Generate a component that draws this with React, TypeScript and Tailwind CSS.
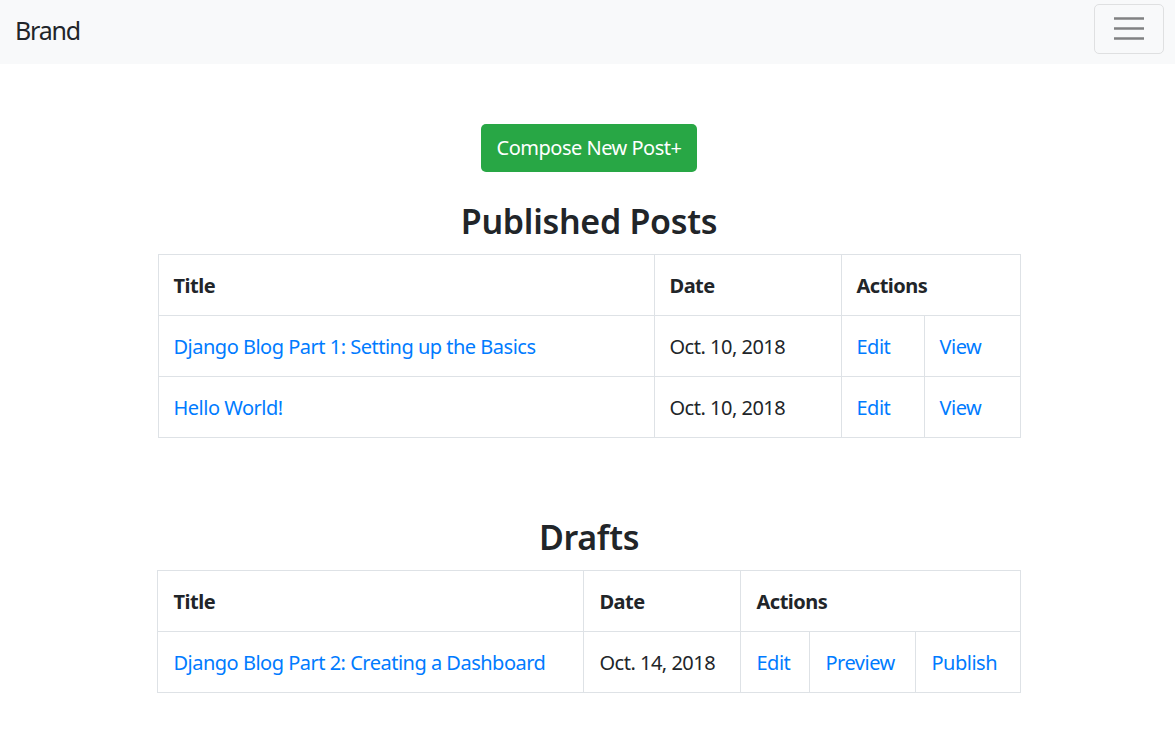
import React from 'react';

const font = { fontFamily: '"Noto Sans", "Liberation Sans", sans-serif' };

type Row = { title: string; date: string; actions: string[] };

const published: Row[] = [
  { title: 'Django Blog Part 1: Setting up the Basics', date: 'Oct. 10, 2018', actions: ['Edit', 'View'] },
  { title: 'Hello World!', date: 'Oct. 10, 2018', actions: ['Edit', 'View'] },
];

const drafts: Row[] = [
  { title: 'Django Blog Part 2: Creating a Dashboard', date: 'Oct. 14, 2018', actions: ['Edit', 'Preview', 'Publish'] },
];

const cell = 'border border-[#dee2e6] px-[15px] pt-[16px] pb-[14px] leading-[30px] text-left align-top';

const PostTable = ({ rows, widths }: { rows: Row[]; widths: number[] }) => {
  const actionCount = rows[0].actions.length;
  return (
    <table className="w-[862px] table-fixed border-collapse text-[20px] tracking-[-0.5px] text-[#212529]">
      <colgroup>
        {widths.map((w, i) => (
          <col key={i} style={{ width: w }} />
        ))}
      </colgroup>
      <thead>
        <tr>
          <th className={`${cell} font-bold`}>Title</th>
          <th className={`${cell} font-bold`}>Date</th>
          <th className={`${cell} font-bold`} colSpan={actionCount}>Actions</th>
        </tr>
      </thead>
      <tbody>
        {rows.map((r) => (
          <tr key={r.title}>
            <td className={cell}>
              <a className="text-[#007bff] whitespace-nowrap" href="#">{r.title}</a>
            </td>
            <td className={`${cell} whitespace-nowrap`}>{r.date}</td>
            {r.actions.map((a) => (
              <td key={a} className={cell}>
                <a className="text-[#007bff]" href="#">{a}</a>
              </td>
            ))}
          </tr>
        ))}
      </tbody>
    </table>
  );
};

export default function App() {
  return (
    <div className="min-h-[745px] bg-white" style={font}>
      <nav className="h-[64px] bg-[#f8f9fa] flex items-start justify-between pl-[15px] pr-[11px]">
        <a href="#" className="text-[25px] leading-[37px] tracking-[-1.2px] mt-[12px] text-[#212529]">Brand</a>
        <button className="mt-[4px] w-[70px] h-[50px] border border-[#dfe0e1] rounded-[5px] flex items-center justify-center">
          <svg width="32" height="30" viewBox="0 0 32 30">
            <path d="M1 4.5h30M1 14.5h30M1 24.5h30" stroke="#808182" strokeWidth="2.5" />
          </svg>
        </button>
      </nav>

      <div className="flex flex-col items-center pl-[3px]">
        <button className="mt-[60px] h-[48px] px-[16px] bg-[#28a745] text-white text-[20px] tracking-[-0.5px] rounded-[5px] leading-[30px]">
          Compose New Post+
        </button>

        <h2 className="mt-[26px] mb-[10px] text-[34px] leading-[46px] font-semibold tracking-[-0.3px] text-[#212529]">Published Posts</h2>
        <PostTable rows={published} widths={[496, 187, 83, 96]} />

        <h2 className="mt-[76px] mb-[10px] text-[34px] leading-[46px] font-semibold tracking-[-0.3px] text-[#212529]">Drafts</h2>
        <PostTable rows={drafts} widths={[426, 157, 69, 106, 104]} />
      </div>
    </div>
  );
}
